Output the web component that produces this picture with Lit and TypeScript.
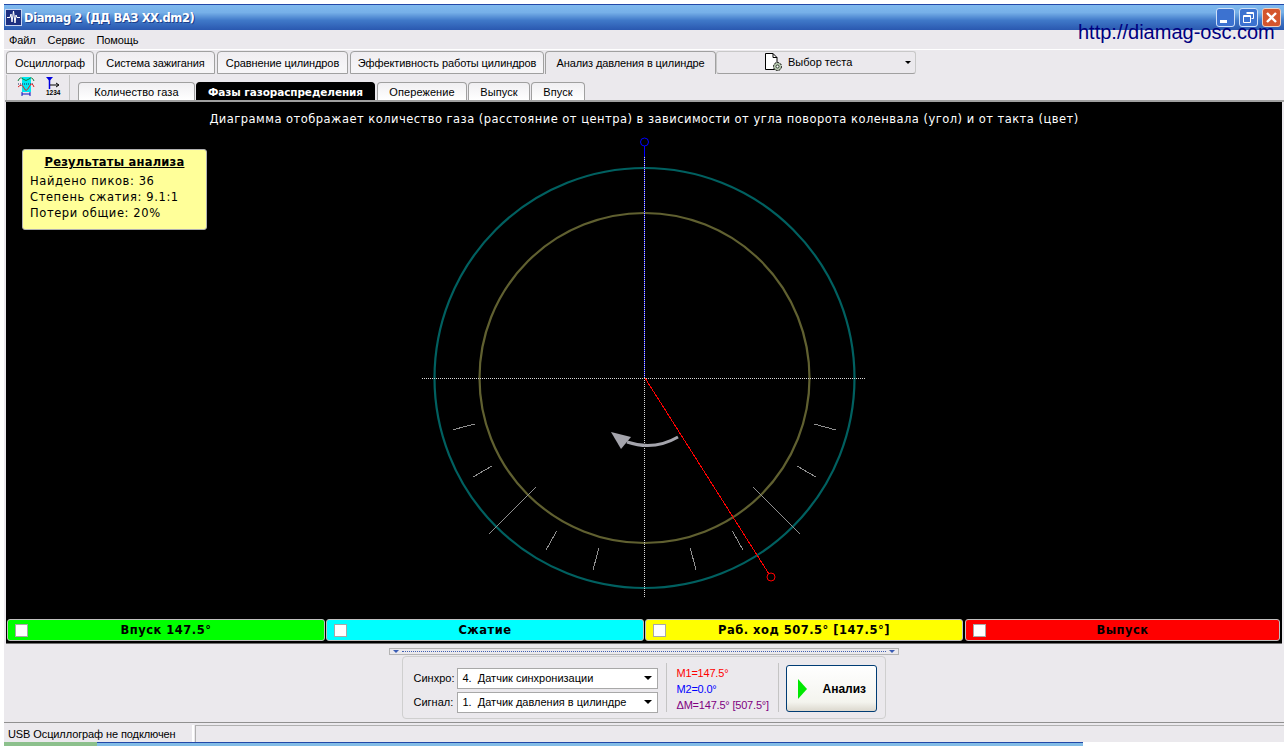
import { LitElement, html, css, svg } from 'lit';
import { customElement } from 'lit/decorators.js';
import { classMap } from 'lit/directives/class-map.js';

const MAIN_TABS = [
  { label: 'Осциллограф', width: 88 },
  { label: 'Система зажигания', width: 119 },
  { label: 'Сравнение цилиндров', width: 131 },
  { label: 'Эффективность работы цилиндров', width: 194 },
  { label: 'Анализ давления в цилиндре', width: 171, active: true },
];

const SUB_TABS = [
  { label: 'Количество газа', width: 117 },
  { label: 'Фазы газораспределения', width: 179, active: true },
  { label: 'Опережение', width: 90 },
  { label: 'Выпуск', width: 62 },
  { label: 'Впуск', width: 54 },
];

const PHASES = [
  { label: 'Впуск 147.5°', color: '#00ff00' },
  { label: 'Сжатие', color: '#00ffff' },
  { label: 'Раб. ход 507.5° [147.5°]', color: '#ffff00' },
  { label: 'Выпуск', color: '#ff0000' },
];

// tick marks on the ring, in page coordinates
const TICKS = [
  [453, 429.7, 475, 424],
  [473, 477, 492, 466],
  [489.3, 534, 536, 487],
  [546, 550, 556.7, 531],
  [593, 570, 599, 547.7],
  [690.3, 548, 696, 570],
  [732.3, 531, 743, 550],
  [753, 487, 800, 534],
  [797, 466, 816, 477],
  [814, 424, 836, 430],
];

@customElement('app-root')
export class AppRoot extends LitElement {
  static styles = css`
    :host {
      display: block;
      position: relative;
      width: 1288px;
      height: 746px;
      overflow: hidden;
      background: #fff;
      font-family: 'Liberation Sans', Arial, sans-serif;
      font-size: 11px;
      color: #000;
    }

    .window {
      display: flex;
      flex-direction: column;
      margin: 4px 0 0 4px;
      width: 1280px;
      height: 738px;
      background: #ebe9ed;
    }

    .titlebar {
      display: flex;
      align-items: center;
      flex: 0 0 26px;
      padding: 0 3px 0 1px;
      box-sizing: border-box;
      border-top: 1px solid #2349a8;
      background: linear-gradient(#7fb9ee 0%, #76b0e8 30%, #3f78c8 62%, #2a58b0 100%);
    }

    .app-icon {
      flex: none;
      margin-right: 2px;
    }

    .title {
      flex: 1;
      color: #fff;
      font-family: 'DejaVu Sans', sans-serif;
      font-size: 11.5px;
      font-weight: bold;
      letter-spacing: -0.42px;
      text-shadow: 1px 1px 0 #1c3f8c;
    }

    .winbtns {
      display: flex;
      gap: 4px;
    }

    .winbtn {
      display: block;
      width: 19px;
      height: 19px;
    }

    .link {
      position: absolute;
      left: 1078px;
      top: 21px;
      color: #000080;
      font-size: 20px;
      line-height: 23px;
    }

    .menu {
      display: flex;
      flex: 0 0 20px;
      align-items: center;
      gap: 12px;
      padding: 0 0 0 5px;
      box-sizing: border-box;
      border-bottom: 1px solid #fff;
      font-size: 11px;
      letter-spacing: -0.12px;
    }

    .main-tabs {
      display: flex;
      flex: 0 0 24px;
      align-items: stretch;
      padding: 1px 0 0 2px;
      box-sizing: border-box;
      letter-spacing: -0.1px;
    }

    .tab {
      display: flex;
      align-items: center;
      justify-content: center;
      flex: none;
      box-sizing: border-box;
      margin-right: 2px;
      border: 1px solid #a0a0a0;
      border-radius: 4px 4px 0 0;
      background: linear-gradient(#efedf1, #f6f5f7 70%);
      white-space: nowrap;
    }

    .tab.active {
      margin: 0 0 0 -1px;
      background: #ebe9ed;
      border-bottom: none;
    }

    .test-select {
      display: flex;
      align-items: center;
      flex: 0 0 200px;
      height: 23px;
      box-sizing: border-box;
      padding: 0 1px 0 47px;
      border: 1px solid #c8c8c8;
      border-radius: 3px;
      border-bottom-color: #a0a0a0;
      gap: 4px;
      letter-spacing: 0;
    }

    .test-select svg {
      margin-top: -1px;
    }

    .test-select span {
      flex: 1;
      margin-top: -2px;
    }

    .caret {
      width: 0;
      height: 0;
      border: 3px solid transparent;
      border-top: 3px solid #000;
      border-bottom: none;
      margin-right: 3px;
    }

    .second-row {
      display: flex;
      flex: 0 0 28px;
      box-sizing: border-box;
      margin-left: 1px;
      border-bottom: 2px solid #a0a0a0;
    }

    .toolbar {
      display: flex;
      flex: 0 0 64px;
      align-items: center;
      box-sizing: border-box;
      margin: 1px 8px 0 1px;
      padding: 0 0 3px 10px;
      gap: 10px;
      border-left: 1px solid #c4c4c4;
      border-right: 1px solid #c4c4c4;
    }

    .sub-tabs {
      display: flex;
      align-items: flex-end;
      letter-spacing: 0.08px;
    }

    .sub-tabs .tab {
      height: 18px;
      margin: 0 1px 0 0;
      border-bottom: none;
      background: linear-gradient(#f0eff2, #fff);
    }

    .sub-tabs .tab.active {
      margin-right: 2px;
      border-color: #000;
      background: #000;
      color: #fff;
      font-family: 'DejaVu Sans', sans-serif;
      font-weight: bold;
      font-size: 10.5px;
      letter-spacing: -0.1px;
    }

    .scope {
      display: flex;
      flex-direction: column;
      flex: 0 0 542px;
      position: relative;
      margin-left: 2px;
      margin-right: 2px;
      background: #000;
      box-sizing: border-box;
      border-bottom: 1px solid #707070;
    }

    .plot {
      display: block;
      flex: 0 0 517px;
      width: 1276px;
      height: 517px;
    }

    .caption {
      position: absolute;
      top: 10px;
      left: 0;
      right: 0;
      text-align: center;
      color: #fff;
      font-family: 'DejaVu Sans', sans-serif;
      font-size: 11.5px;
      line-height: 15px;
      letter-spacing: 0.47px;
    }

    .results {
      position: absolute;
      left: 16px;
      top: 47px;
      width: 185px;
      height: 81px;
      box-sizing: border-box;
      padding: 4px 7px;
      background: #ffff99;
      border: 1px solid #b0b0b0;
      border-radius: 3px;
      font-family: 'DejaVu Sans', sans-serif;
      font-size: 11.5px;
      line-height: 16px;
      letter-spacing: 0.6px;
    }

    .results h3 {
      margin: 0 0 3px;
      font-size: 11.5px;
      line-height: 16px;
      font-weight: bold;
      text-align: center;
      text-decoration: underline;
      letter-spacing: 0.22px;
    }

    .phases {
      display: flex;
      flex: none;
      gap: 1px;
      padding: 0 2px 2px 1px;
    }

    .phase {
      display: flex;
      align-items: center;
      flex: 0 0 318px;
      box-sizing: border-box;
      height: 22px;
      padding-left: 7px;
      border: 1px solid #c0c0c0;
      border-radius: 3px;
      font-family: 'DejaVu Sans', sans-serif;
      font-size: 11.5px;
      font-weight: bold;
      letter-spacing: 0.5px;
    }

    .phase:nth-child(3) {
      margin-right: 1px;
    }

    .phase:last-child {
      flex: 1;
    }

    .phase i {
      flex: none;
      width: 13px;
      height: 13px;
      box-sizing: border-box;
      background: #fff;
      border: 1px solid #a8a8a8;
    }

    .phase span {
      flex: 1;
      padding-right: 20px;
      text-align: center;
    }

    .bottom {
      display: flex;
      flex-direction: column;
      align-items: center;
      flex: 0 0 79px;
      box-sizing: border-box;
      border-bottom: 1px solid #909090;
      padding-top: 4px;
    }

    .splitter {
      display: flex;
      align-items: center;
      justify-content: space-between;
      flex: none;
      box-sizing: border-box;
      width: 510px;
      height: 7px;
      padding: 0 3px;
      border: 1px solid #b4b4b4;
    }

    .splitter b {
      flex: 1;
      margin: 0 3px;
      border-top: 1px dotted #4060b0;
    }

    .arrow-down {
      width: 0;
      height: 0;
      border: 3px solid transparent;
      border-top: 3px solid #3a5cb4;
      border-bottom: none;
    }

    .controls {
      display: flex;
      align-items: stretch;
      flex: none;
      box-sizing: border-box;
      width: 484px;
      height: 63px;
      margin-top: 1px;
      margin-left: -1px;
      padding: 6px 8px 6px 11px;
      border: 1px solid #cfcfcf;
      border-radius: 4px;
    }

    .selects {
      display: flex;
      flex-direction: column;
      gap: 3px;
      flex: 0 0 244px;
      padding-top: 5px;
      box-sizing: border-box;
    }

    .select-row {
      display: flex;
      align-items: center;
      height: 21px;
    }

    .select-row label {
      flex: 0 0 43px;
      padding-bottom: 1px;
    }

    .select {
      display: flex;
      align-items: center;
      flex: 0 0 201px;
      height: 21px;
      box-sizing: border-box;
      padding: 0 5px 1px;
      background: #fff;
      border: 1px solid #a8a8a8;
      white-space: pre;
    }

    .select span {
      flex: 1;
    }

    .select .caret {
      border-width: 4px;
      border-bottom: none;
      margin-right: 0;
    }

    .markers {
      display: flex;
      flex-direction: column;
      flex: 0 0 113px;
      box-sizing: border-box;
      margin: 0 7px 0 8px;
      padding: 2px 0 0 10px;
      border-left: 1px solid #c4c4c4;
      border-right: 1px solid #c4c4c4;
      line-height: 16px;
      letter-spacing: -0.2px;
      white-space: nowrap;
    }

    .m1 { color: #ff0000; }
    .m2 { color: #0000ff; }
    .dm { color: #800080; }

    .go {
      display: flex;
      align-items: center;
      flex: 0 0 91px;
      height: 47px;
      box-sizing: border-box;
      margin-top: 2px;
      padding-left: 10px;
      border: 1px solid #003c74;
      border-radius: 3px;
      background: linear-gradient(#fff, #f4f4ee 80%, #dcd8ce);
      font-weight: bold;
      font-size: 12px;
    }

    .go svg {
      flex: none;
      margin-right: 14px;
    }

    .status {
      display: flex;
      flex: 1;
      margin-top: 2px;
    }

    .status-cell {
      display: flex;
      align-items: center;
      flex: 0 0 190px;
      box-sizing: border-box;
      padding-left: 4px;
      border-right: 2px solid #fff;
      letter-spacing: -0.1px;
    }

    .status-rest {
      flex: 1;
      margin-left: 1px;
      border-left: 1px solid #b0b0b0;
      border-top: 1px solid #b0b0b0;
    }

    .taskbar {
      display: flex;
      position: absolute;
      left: 0;
      right: 0;
      bottom: 0;
      height: 4px;
      background: #fff;
    }

    .taskbar .start {
      flex: 0 0 93px;
      margin-left: 4px;
      background: #8cc08c;
    }

    .taskbar .bar {
      flex: 0 0 986px;
      border-top: 1px solid #2349a8;
      background: #82bce6;
    }
  `;

  private renderDiagram() {
    return svg`
      <circle cx="644.5" cy="378" r="210" fill="none" stroke="#006060" stroke-width="2.2"/>
      <circle cx="644.5" cy="378" r="165" fill="none" stroke="#606030" stroke-width="2.2"/>
      <g fill="none" shape-rendering="crispEdges">
        ${TICKS.map(([x1, y1, x2, y2]) => svg`<line x1=${x1} y1=${y1} x2=${x2} y2=${y2} stroke="#909090"/>`)}
        <line x1="422" y1="378.5" x2="866" y2="378.5" stroke="#d8d8d8" stroke-dasharray="1 1"/>
        <line x1="644.5" y1="378" x2="644.5" y2="598" stroke="#d8d8d8" stroke-dasharray="1 1"/>
        <line x1="644.5" y1="146" x2="644.5" y2="378" stroke="#0000ff"/>
        <line x1="644.5" y1="157" x2="644.5" y2="378" stroke="#d8d8d8" stroke-dasharray="1 1"/>
        <line x1="645" y1="378" x2="769" y2="574" stroke="#ff0000"/>
      </g>
      <circle cx="644.5" cy="142" r="4" fill="none" stroke="#0000ff"/>
      <circle cx="771" cy="577" r="4" fill="none" stroke="#ff0000"/>
      <path d="M678 437 Q654 451 627 442" fill="none" stroke="#a4a4ac" stroke-width="3"/>
      <path d="M611 432 L631 437 L621 449 Z" fill="#a4a4ac"/>
    `;
  }

  render() {
    return html`
      <div class="window">
        <div class="titlebar">
          <svg class="app-icon" width="17" height="17" viewBox="0 0 17 17">
            <rect width="17" height="17" fill="#1c2f80"/>
            <rect x="0.5" y="0.5" width="16" height="16" fill="none" stroke="#c8d4f0"/>
            <path d="M2 8.5H5L6 5L7 13L8.5 2L10 14L11 6L12 8.5H15" fill="none" stroke="#fff"/>
          </svg>
          <div class="title">Diamag 2 (ДД ВАЗ ХХ.dm2)</div>
          <div class="winbtns">
            <svg class="winbtn" viewBox="0 0 19 19">
              <rect x="0.5" y="0.5" width="18" height="18" rx="2.5" fill="#3c72d0" stroke="#d0e0f8"/>
              <rect x="4" y="12" width="7" height="3" fill="#fff"/>
            </svg>
            <svg class="winbtn" viewBox="0 0 19 19">
              <rect x="0.5" y="0.5" width="18" height="18" rx="2.5" fill="#3c72d0" stroke="#d0e0f8"/>
              <path d="M7.5 4.5H14.5V10.5H12.5M4.5 7.5H11.5V14.5H4.5ZM4.5 8.5H11.5M7.5 5.5H14.5" fill="none" stroke="#fff"/>
            </svg>
            <svg class="winbtn" viewBox="0 0 19 19">
              <rect x="0.5" y="0.5" width="18" height="18" rx="2.5" fill="#d4552c" stroke="#f0d0c0"/>
              <path d="M5 5L14 14M14 5L5 14" stroke="#fff" stroke-width="2.4"/>
            </svg>
          </div>
        </div>

        <div class="menu"><span>Файл</span><span>Сервис</span><span>Помощь</span></div>

        <div class="main-tabs">
          ${MAIN_TABS.map(
            (t) => html`<div class=${classMap({ tab: true, active: !!t.active })} style="width:${t.width}px">${t.label}</div>`
          )}
          <div class="test-select">
            <svg width="20" height="20" viewBox="0 0 20 20">
              <path d="M1.5 1.5H9L13 5.5V17.5H1.5Z" fill="#fff" stroke="#000"/>
              <path d="M9 1.5V5.5H13" fill="none" stroke="#000"/>
              <circle cx="13.5" cy="14.5" r="4" fill="#b8c8b0" stroke="#000" stroke-dasharray="2 1"/>
              <circle cx="13.5" cy="14.5" r="1.5" fill="#fff" stroke="#304030"/>
            </svg>
            <span>Выбор теста</span>
            <i class="caret"></i>
          </div>
        </div>

        <div class="second-row">
          <div class="toolbar">
            <svg width="18" height="20" viewBox="0 0 18 20">
              <rect x="5" y="1" width="9" height="15" fill="#00e8f0"/>
              <path d="M1 5Q3 0 6 3T12 3T17 5" fill="none" stroke="#108040"/>
              <path d="M1 8H17" stroke="#202060" stroke-dasharray="1 1"/>
              <path d="M1 11Q5 7 7 12T12 11T17 11" fill="none" stroke="#e02020"/>
              <path d="M5 18H13M5 16V20M13 16V20" stroke="#1010c0"/>
            </svg>
            <svg width="16" height="20" viewBox="0 0 16 20">
              <path d="M1 1H8L4.5 5Z" fill="#0000e0"/>
              <path d="M4.5 3V13" stroke="#0000e0" stroke-width="1.5"/>
              <path d="M5 9H13M11 7L14 9L11 11" fill="none" stroke="#000"/>
              <text x="1" y="19" font-family="'Liberation Sans', sans-serif" font-size="6.5" font-weight="bold">1234</text>
            </svg>
          </div>
          <div class="sub-tabs">
            ${SUB_TABS.map(
              (t) => html`<div class=${classMap({ tab: true, active: !!t.active })} style="width:${t.width}px">${t.label}</div>`
            )}
          </div>
        </div>

        <div class="scope">
          <svg class="plot" viewBox="6 102 1276 517">${this.renderDiagram()}</svg>
          <div class="caption">Диаграмма отображает количество газа (расстояние от центра) в зависимости от угла поворота коленвала (угол) и от такта (цвет)</div>
          <div class="results">
            <h3>Результаты анализа</h3>
            <div>Найдено пиков: 36</div>
            <div>Степень сжатия: 9.1:1</div>
            <div>Потери общие: 20%</div>
          </div>
          <div class="phases">
            ${PHASES.map(
              (p) => html`<div class="phase" style="background:${p.color}"><i></i><span>${p.label}</span></div>`
            )}
          </div>
        </div>

        <div class="bottom">
          <div class="splitter"><i class="arrow-down"></i><b></b><i class="arrow-down"></i></div>
          <div class="controls">
            <div class="selects">
              <div class="select-row">
                <label>Синхро:</label>
                <div class="select"><span>4.  Датчик синхронизации</span><i class="caret"></i></div>
              </div>
              <div class="select-row">
                <label>Сигнал:</label>
                <div class="select"><span>1.  Датчик давления в цилиндре</span><i class="caret"></i></div>
              </div>
            </div>
            <div class="markers">
              <div class="m1">M1=147.5°</div>
              <div class="m2">M2=0.0°</div>
              <div class="dm">ΔM=147.5° [507.5°]</div>
            </div>
            <div class="go">
              <svg width="12" height="20" viewBox="0 0 12 20"><path d="M1 0L10 10L1 20Z" fill="#00e800"/></svg>
              Анализ
            </div>
          </div>
        </div>

        <div class="status">
          <div class="status-cell">USB Осциллограф не подключен</div>
          <div class="status-rest"></div>
        </div>
      </div>
      <div class="link">http://diamag-osc.com</div>
      <div class="taskbar"><div class="start"></div><div class="bar"></div></div>
    `;
  }
}
